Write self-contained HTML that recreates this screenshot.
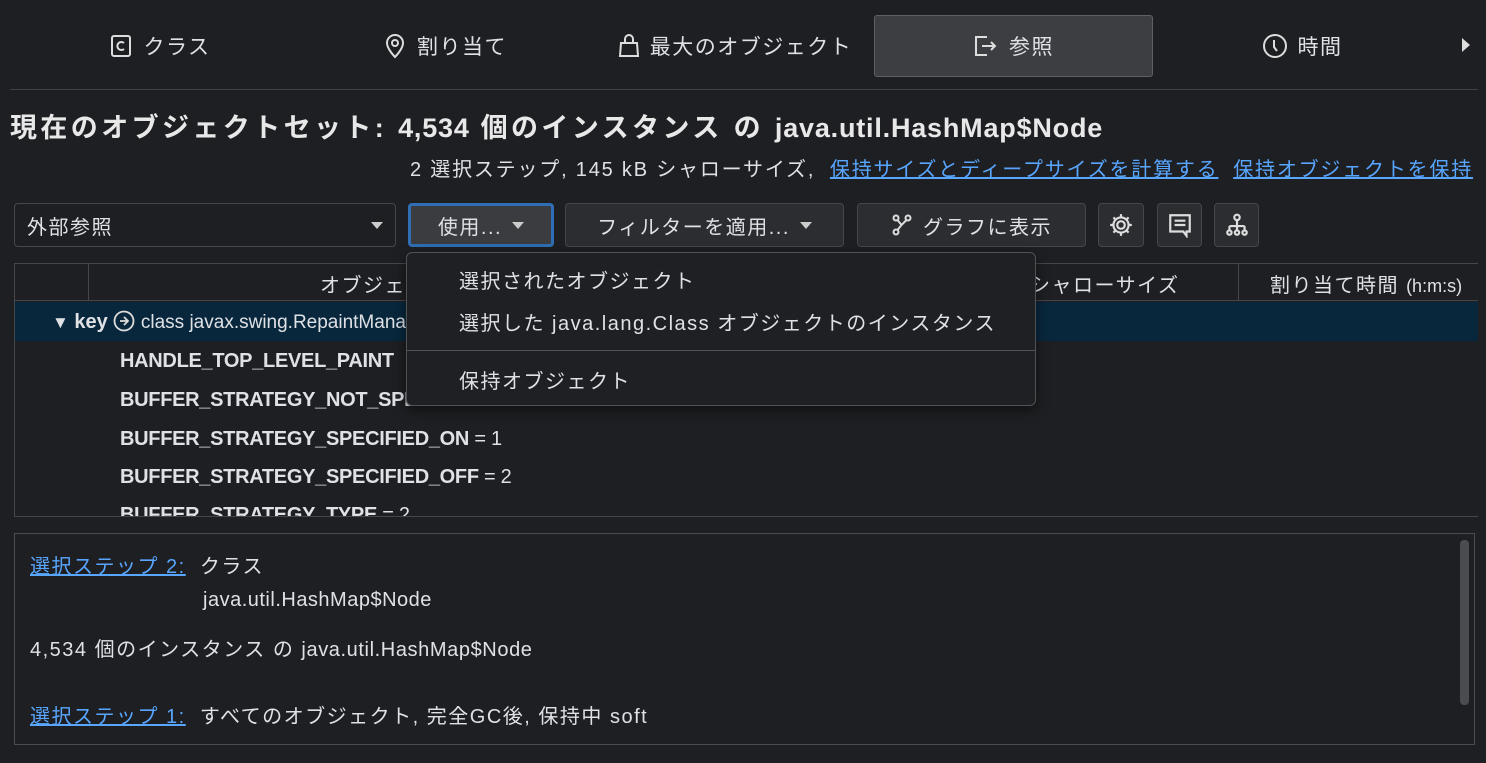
<!DOCTYPE html>
<html><head><meta charset="utf-8"><style>
*{box-sizing:border-box;margin:0;padding:0}
body{width:1486px;height:763px;background:#1e1f22;color:#dfe1e5;font-family:"Liberation Sans","Noto Sans CJK JP",sans-serif;font-size:20px;position:relative;overflow:hidden;letter-spacing:1.5px}
.a{position:absolute;white-space:nowrap}
.tab{position:absolute;top:15px;height:62px;display:flex;align-items:center;justify-content:center;gap:10px;font-size:21px}
.btn{position:absolute;top:203px;height:44px;background:#2b2d30;border:1px solid #45474b;border-radius:4px;display:flex;align-items:center;justify-content:center;gap:10px;font-size:20px}
.tri{width:0;height:0;border-left:6px solid transparent;border-right:6px solid transparent;border-top:7px solid #ccc;display:inline-block}
.row{position:absolute;left:120px;font-weight:bold;font-size:20px;letter-spacing:-0.3px}
.row span{font-weight:normal}
a{color:#58a6ff;text-decoration:underline}
.l{letter-spacing:0.8px}
</style></head><body>
<div class="tab" style="left:30px;width:260px"><svg width="24" height="24" viewBox="0 0 24 24" fill="none" stroke="#ddd" stroke-width="2"><rect x="3" y="2" width="18" height="20" rx="2"/><path d="M15 9a4 4 0 1 0 0 6"/></svg>クラス</div>
<div class="tab" style="left:315px;width:260px"><svg width="24" height="26" viewBox="0 0 24 26" fill="none" stroke="#ddd" stroke-width="2"><path d="M12 24s-8-8-8-14a8 8 0 0 1 16 0c0 6-8 14-8 14z"/><circle cx="12" cy="10" r="3"/></svg>割り当て</div>
<div class="tab" style="left:600px;width:270px"><svg width="22" height="26" viewBox="0 0 22 26" fill="none" stroke="#ddd" stroke-width="2"><path d="M3 10h16l1 13H2z"/><path d="M7 10V6a4 4 0 0 1 8 0v4"/></svg>最大のオブジェクト</div>
<div class="tab" style="left:874px;width:279px;background:#3c3e42;border:1px solid #5e6064;border-radius:3px"><svg width="26" height="24" viewBox="0 0 26 24" fill="none" stroke="#ddd" stroke-width="2"><path d="M14 3H3v18h11"/><path d="M9 12h13M18 8l4 4-4 4"/></svg>参照</div>
<div class="tab" style="left:1172px;width:260px"><svg width="26" height="26" viewBox="0 0 26 26" fill="none" stroke="#ddd" stroke-width="2"><circle cx="13" cy="13" r="11"/><path d="M12 7v7l3 4"/></svg>時間</div>
<div class="a" style="left:1462px;top:38px;width:0;height:0;border-top:7px solid transparent;border-bottom:7px solid transparent;border-left:8px solid #ddd"></div>
<div class="a" style="left:10px;top:89px;width:1468px;height:1px;background:#3f4145"></div>
<div class="a" style="left:10px;top:106px;font-size:27px;font-weight:bold;color:#e8e8e8;letter-spacing:3.4px">現在のオブジェクトセット:&nbsp;<span class="l">4,534</span> 個のインスタンス の <span class="l">java.util.HashMap$Node</span></div>
<div class="a" style="left:410px;top:153px;font-size:20px;letter-spacing:1.8px">2 選択ステップ, 145 kB シャローサイズ, &nbsp;<a>保持サイズとディープサイズを計算する</a>&nbsp; <a>保持オブジェクトを保持</a></div>
<div class="btn" style="left:14px;width:382px;justify-content:space-between;padding:0 12px;background:#1e1f22">外部参照<span class="tri"></span></div>
<div class="btn" style="left:408px;width:146px;background:#3a3c40;border:3px solid #2f6db4">使用...<span class="tri"></span></div>
<div class="btn" style="left:565px;width:279px">フィルターを適用...<span class="tri"></span></div>
<div class="btn" style="left:857px;width:229px"><svg width="22" height="24" viewBox="0 0 22 24" fill="none" stroke="#ddd" stroke-width="2"><circle cx="5" cy="5" r="2.5"/><circle cx="17" cy="5" r="2.5"/><circle cx="5" cy="19" r="2.5"/><path d="M6.5 7l4 5 5-5M10.5 12l-4 5"/></svg>グラフに表示</div>
<div class="btn" style="left:1098px;width:46px"><svg width="26" height="26" viewBox="0 0 24 24" fill="none" stroke="#ddd" stroke-width="2"><circle cx="12" cy="12" r="3.5"/><path d="M12 2v3M12 19v3M2 12h3M19 12h3M5 5l2 2M17 17l2 2M5 19l2-2M17 7l2-2"/><circle cx="12" cy="12" r="7"/></svg></div>
<div class="btn" style="left:1157px;width:45px"><svg width="26" height="26" viewBox="0 0 24 24" fill="none" stroke="#ddd" stroke-width="2"><path d="M3 3h18v15h-3v4l-3-4H3z"/><path d="M7 8h10M7 12h10"/></svg></div>
<div class="btn" style="left:1214px;width:45px"><svg width="26" height="26" viewBox="0 0 24 24" fill="none" stroke="#ddd" stroke-width="2"><circle cx="12" cy="5" r="2.5"/><path d="M12 8v5M5 13h14M5 13v4M12 13v4M19 13v4"/><circle cx="5" cy="19" r="2"/><circle cx="12" cy="19" r="2"/><circle cx="19" cy="19" r="2"/></svg></div>

<div class="a" style="left:14px;top:263px;width:1464px;height:254px;border:1px solid #45474b;border-right:none"></div>
<div class="a" style="left:15px;top:300px;width:1463px;height:1px;background:#45474b"></div>
<div class="a" style="left:88px;top:264px;width:1px;height:36px;background:#45474b"></div>
<div class="a" style="left:1238px;top:264px;width:1px;height:36px;background:#45474b"></div>
<div class="a" style="left:320px;top:269px">オブジェクト</div>
<div class="a" style="left:1030px;top:269px">シャローサイズ</div>
<div class="a" style="left:1270px;top:269px">割り当て時間 <span style="font-size:18px;letter-spacing:0">(h:m:s)</span></div>
<div class="a" style="left:15px;top:302px;width:1463px;height:39px;background:#08273c"></div>
<div class="a" style="left:52px;top:310px;letter-spacing:0"><span style="font-size:17px">▼</span> <b>key</b> <svg width="22" height="22" viewBox="0 0 22 22" fill="none" stroke="#ddd" stroke-width="1.8" style="vertical-align:-4px"><circle cx="11" cy="11" r="9.5"/><path d="M7 11h8M11 7l4 4-4 4"/></svg> <span style="font-size:19px">class javax.swing.RepaintManager</span></div>
<div class="row" style="top:350px">HANDLE_TOP_LEVEL_PAINT</div>
<div class="row" style="top:389px">BUFFER_STRATEGY_NOT_SPECIFIED</div>
<div class="row" style="top:428px">BUFFER_STRATEGY_SPECIFIED_ON <span>= 1</span></div>
<div class="row" style="top:466px">BUFFER_STRATEGY_SPECIFIED_OFF <span>= 2</span></div>
<div class="a" style="left:15px;top:500px;width:1000px;height:16px;overflow:hidden"><div class="row" style="left:105px;top:4px">BUFFER_STRATEGY_TYPE <span>= 2</span></div></div>

<div class="a" style="left:406px;top:252px;width:630px;height:154px;background:#1f2023;border:1px solid #505256;border-radius:6px;box-shadow:0 4px 12px rgba(0,0,0,.5)"></div>
<div class="a" style="left:459px;top:265px">選択されたオブジェクト</div>
<div class="a" style="left:459px;top:307px">選択した java.lang.Class オブジェクトのインスタンス</div>
<div class="a" style="left:407px;top:350px;width:628px;height:1px;background:#505256"></div>
<div class="a" style="left:459px;top:365px">保持オブジェクト</div>

<div class="a" style="left:14px;top:533px;width:1461px;height:212px;border:1px solid #4a4c50"></div>
<div class="a" style="left:1460px;top:540px;width:9px;height:165px;background:#4a4c50;border-radius:4px"></div>
<div class="a" style="left:30px;top:550px"><a>選択ステップ 2:</a>&nbsp; クラス</div>
<div class="a" style="left:203px;top:589px;letter-spacing:0.5px">java.util.HashMap$Node</div>
<div class="a" style="left:30px;top:633px">4,534 個のインスタンス の <span style="letter-spacing:0.6px">java.util.HashMap$Node</span></div>
<div class="a" style="left:30px;top:700px"><a>選択ステップ 1:</a>&nbsp; すべてのオブジェクト, 完全GC後, 保持中 soft</div>
</body></html>
